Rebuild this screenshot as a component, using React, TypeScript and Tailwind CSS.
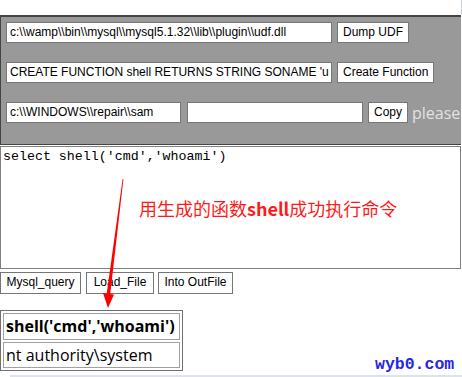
import React from "react";

const inputCls =
  "h-[21px] border border-[#767676] bg-white px-[3px] text-[12px] leading-[19px] text-black whitespace-nowrap overflow-hidden";
const btnCls =
  "h-[21px] border border-[#767676] bg-white px-[5px] text-[12px] leading-[19px] text-black whitespace-nowrap";

export default function App() {
  const arial = { fontFamily: '"Liberation Sans", Arial, sans-serif' };

  return (
    <div className="relative w-[462px] h-[377px] overflow-hidden bg-white" style={arial}>
      <div className="h-[15px] border-r border-[#c9ced8] w-[462px]" />

      {/* tool panel */}
      <div className="w-[461px] h-[130px] border-t-2 border-l border-b border-[#444] bg-[#999] pt-[5px] pl-[5px]">
        <div className="flex items-center gap-[5px]">
          <div className={`${inputCls} w-[326px]`}>c:\\wamp\\bin\\mysql\\mysql5.1.32\\lib\\plugin\\udf.dll</div>
          <div className={btnCls}>Dump UDF</div>
        </div>
        <div className="flex items-center gap-[5px] mt-[19px]">
          <div className={`${inputCls} w-[326px]`}>CREATE FUNCTION shell RETURNS STRING SONAME 'u</div>
          <div className={btnCls}>Create Function</div>
        </div>
        <div className="flex items-center mt-[19px]">
          <div className={`${inputCls} w-[175px]`}>c:\\WINDOWS\\repair\\sam</div>
          <div className={`${inputCls} w-[176px] ml-[6px]`} />
          <div className={`${btnCls} ml-[5px]`}>Copy</div>
          <div className="ml-[4px] text-[16px] leading-[20px] text-[#e2e2e2] whitespace-nowrap" style={{ fontFamily: '"Open Sans", sans-serif' }}>
            please
          </div>
        </div>
      </div>

      {/* query area */}
      <div className="relative w-[461px] h-[123px] mt-px border border-[#808080] bg-white px-[2px] pt-[2px]">
        <div className="text-[13.3px] leading-[16px] text-black" style={{ fontFamily: '"Liberation Mono", monospace' }}>
          select shell('cmd','whoami')
        </div>
        <div
          className="absolute left-[138px] top-[50px] text-[18px] leading-[22px] text-[#ff1a1a] whitespace-nowrap"
          style={{ fontFamily: '"Noto Sans CJK SC", sans-serif' }}
        >
          用生成的函数<span className="font-semibold">shell</span>成功执行命令
        </div>
      </div>

      {/* actions */}
      <div className="flex gap-[4px] mt-[3px]">
        <div className={`${btnCls} h-[22px] w-[81px] border-[#6e6e6e] text-center`}>Mysql_query</div>
        <div className={`${btnCls} h-[22px] w-[68px] border-[#6e6e6e] text-center ml-px`}>Load_File</div>
        <div className={`${btnCls} h-[22px] w-[75px] border-[#6e6e6e] text-center`}>Into OutFile</div>
      </div>

      {/* result */}
      <div className="mt-[16px] w-[183px] border border-[#707070] p-[2px] flex flex-col gap-[2px]" style={{ fontFamily: '"Open Sans", sans-serif' }}>
        <div className="h-[27px] border border-[#a0a0a0] px-[2px] text-[16px] leading-[25px] font-bold text-black whitespace-nowrap">
          shell('cmd','whoami')
        </div>
        <div className="h-[26px] border border-[#a0a0a0] px-[2px] text-[16px] leading-[24px] text-black whitespace-nowrap">
          nt authority\system
        </div>
      </div>

      <div className="absolute left-[10px] right-0 top-[375px] h-[2px] bg-[#dde3ee]" />

      <div
        className="absolute left-[375px] top-[356px] text-[16.5px] leading-[18px] font-bold text-[#2626e6]"
        style={{ fontFamily: '"Liberation Mono", monospace' }}
      >
        wyb0.com
      </div>

      <svg className="absolute left-0 top-0 pointer-events-none" width="462" height="377" viewBox="0 0 462 377">
        <polygon points="122.6,179 123.4,179 110,296 106.4,296" fill="#ff0000" />
        <polygon points="103,293 114,294.5 108,308" fill="#ff0000" />
      </svg>
    </div>
  );
}
